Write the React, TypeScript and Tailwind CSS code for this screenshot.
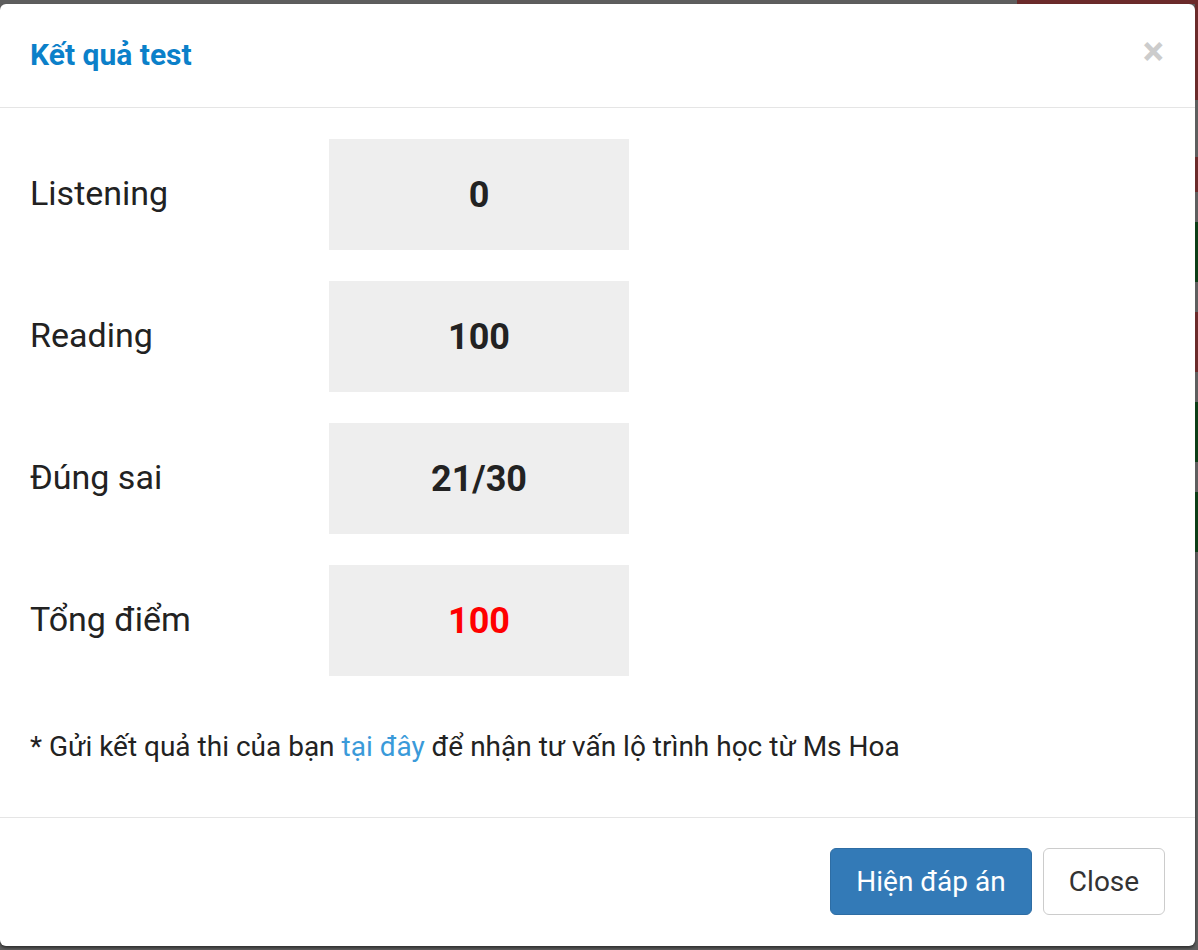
import React from "react";

const rows = [
  { label: "Listening", value: "0", red: false },
  { label: "Reading", value: "100", red: false },
  { label: "Đúng sai", value: "21/30", red: false },
  { label: "Tổng điểm", value: "100", red: true },
];

// dải màu của trang phía sau lớp phủ (mép phải)
const strips = [
  { h: "h-[96px]", c: "bg-[#6b2a2a]" },
  { h: "h-[57px]", c: "bg-[#5e5e5e]" },
  { h: "h-[35px]", c: "bg-[#6b2a2a]" },
  { h: "h-[30px]", c: "bg-[#5e5e5e]" },
  { h: "h-[60px]", c: "bg-[#0d3d16]" },
  { h: "h-[30px]", c: "bg-[#5e5e5e]" },
  { h: "h-[60px]", c: "bg-[#6b2a2a]" },
  { h: "h-[30px]", c: "bg-[#5e5e5e]" },
  { h: "h-[60px]", c: "bg-[#0d3d16]" },
  { h: "h-[30px]", c: "bg-[#5e5e5e]" },
  { h: "h-[60px]", c: "bg-[#0d3d16]" },
];

export default function App() {
  return (
    <div className="w-[1198px] h-[950px] flex flex-col bg-[#5e5e5e] overflow-hidden font-['Roboto','Liberation_Sans',sans-serif]">
      {/* mép trên */}
      <div className="flex h-[4px] shrink-0">
        <div className="flex-1 bg-[#5e5e5e]" />
        <div className="w-[181px] bg-[#6b2a2a]" />
      </div>

      <div className="flex h-[942px] shrink-0">
        {/* hộp modal */}
        <div className="w-[1195px] h-full bg-white rounded-[6px] flex flex-col shadow-[0_2px_3px_rgba(0,0,0,0.5)]">
          {/* header */}
          <div className="h-[104px] shrink-0 border-b border-[#e5e5e5] flex items-center justify-between pl-[30px] pr-[31px]">
            <h4 className="text-[30px] font-bold text-[#0b80c9] leading-none mt-[-2px]">Kết quả test</h4>
            <button className="text-[40px] font-bold leading-none text-[#cccccc] mt-[-8px]">×</button>
          </div>

          {/* body */}
          <div className="flex-1 px-[30px] pt-[31px] flex flex-col">
            <div className="flex flex-col gap-[31px]">
              {rows.map((r) => (
                <div key={r.label} className="flex items-center h-[111px]">
                  <div className="w-[299px] text-[34px] text-[#222] leading-none mt-[-4px]">{r.label}</div>
                  <div
                    className={
                      r.red
                        ? "w-[300px] h-full bg-[#eeeeee] flex items-center justify-center text-[36px] font-bold text-[#ff0000]"
                        : "w-[300px] h-full bg-[#eeeeee] flex items-center justify-center text-[36px] font-bold text-[#222]"
                    }
                  >
                    {r.value}
                  </div>
                </div>
              ))}
            </div>
            <p className="mt-[53px] text-[28px] leading-[36px] text-[#222]">
              * Gửi kết quả thi của bạn <a className="text-[#3a9ad9]">tại đây</a> để nhận tư vấn lộ trình học từ Ms Hoa
            </p>
          </div>

          {/* footer */}
          <div className="h-[129px] shrink-0 border-t border-[#e5e5e5] flex items-start justify-end gap-[11px] pt-[30px] pr-[30px]">
            <button className="h-[67px] w-[202px] rounded-[6px] bg-[#337ab7] border border-[#2e6da4] text-white text-[28px]">
              Hiện đáp án
            </button>
            <button className="h-[67px] w-[122px] rounded-[6px] bg-white border border-[#cccccc] text-[#333] text-[28px]">
              Close
            </button>
          </div>
        </div>

        {/* mép phải */}
        <div className="w-[3px] flex flex-col">
          {strips.map((s, i) => (
            <div key={i} className={`${s.h} ${s.c}`} />
          ))}
        </div>
      </div>
    </div>
  );
}
